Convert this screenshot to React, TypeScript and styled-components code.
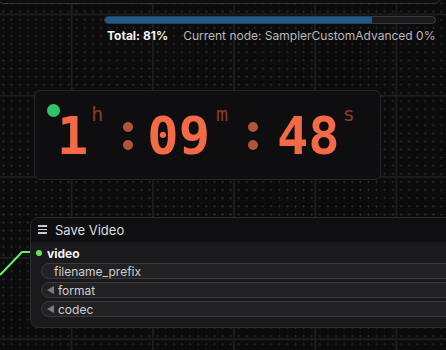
import React from 'react'
import styled, { createGlobalStyle } from 'styled-components'

const GlobalStyle = createGlobalStyle`
	html, body {
		margin: 0;
		padding: 0;
		background: #0b0b0c;
		overflow: hidden;
	}
`

const Canvas = styled.div`
	position: relative;
	width: 446px;
	height: 350px;
	overflow: hidden;
	font-family: Inter, 'Liberation Sans', sans-serif;
	background-color: #0b0b0c;
	background-image:
		linear-gradient(to right, #1d1d1f 2px, transparent 2px),
		linear-gradient(to bottom, #1d1d1f 2px, transparent 2px),
		radial-gradient(circle, #262628 0.9px, transparent 1.1px);
	background-size: 81.2px 81.2px, 81.2px 81.2px, 8.12px 8.12px;
	background-position: -10.5px 0, 0 13.5px, -0.5px -0.5px;
`

const TopPanel = styled.div`
	position: absolute;
	left: -4px;
	top: -12px;
	width: 444px;
	height: 14px;
	border: 1px solid #38383a;
	border-radius: 0 0 8px 8px;
	background: #0e0e0f;
`

const Progress = styled.div`
	position: absolute;
	left: 104px;
	top: 16px;
	width: 332px;
	display: flex;
	flex-direction: column;
	gap: 5px;
`

const Track = styled.div`
	height: 6px;
	border: 1px solid #3a3a3c;
	border-radius: 4px;
	background: #1b1b1d;
	overflow: hidden;
`

const Fill = styled.div`
	height: 100%;
	background: #1b5b8e;
`

const ProgressText = styled.div`
	display: flex;
	gap: 15px;
	padding-left: 3px;
	font-size: 12px;
	line-height: 14px;
	white-space: nowrap;
`

const Total = styled.span`
	color: #f2f2f2;
	font-weight: 700;
`

const NodeInfo = styled.span`
	color: #b9b9bb;
`

const Timer = styled.div`
	position: absolute;
	left: 34px;
	top: 90px;
	width: 345px;
	height: 88px;
	background: #0e0e10;
	border: 1px solid #262628;
	border-radius: 6px;
`

const StatusDot = styled.span`
	position: absolute;
	left: 12px;
	top: 13px;
	width: 13px;
	height: 13px;
	border-radius: 50%;
	background: #2fc56b;
`

const Digits = styled.div`
	display: flex;
	align-items: flex-start;
	padding: 19px 0 0 22px;
	font-family: 'DejaVu Sans Mono', 'Liberation Mono', monospace;
`

const Number = styled.span`
	font-size: 52px;
	font-weight: 700;
	line-height: 52px;
	color: #f46a45;
`

const Unit = styled.span<{ $gap: number }>`
	margin: -6px 0 0 ${p => p.$gap}px;
	font-size: 20px;
	line-height: 20px;
	color: #8a3a2a;
`

const Colon = styled.span<{ $before: number; $after: number }>`
	display: flex;
	flex-direction: column;
	gap: 8px;
	margin: 12px ${p => p.$after}px 0 ${p => p.$before}px;
	&::before,
	&::after {
		content: '';
		width: 10px;
		height: 10px;
		border-radius: 50%;
		background: #b5523a;
	}
`

const Link = styled.svg`
	position: absolute;
	left: 0;
	top: 240px;
`

const Node = styled.div`
	position: absolute;
	left: 30px;
	top: 217px;
	width: 440px;
	height: 109px;
	border: 1px solid #2b2b2d;
	border-radius: 8px;
	background: #1a1a1c;
	overflow: hidden;
`

const Header = styled.div`
	display: flex;
	align-items: center;
	gap: 8px;
	height: 24px;
	padding-left: 7px;
	background: #0f0f11;
	color: #dcdcdc;
	font-size: 13px;
	line-height: 16px;
	padding-bottom: 1px;
	box-sizing: border-box;
`

const Burger = styled.span`
	display: flex;
	flex-direction: column;
	gap: 2.2px;
	width: 9px;
	&::before,
	&::after,
	& > i {
		content: '';
		display: block;
		height: 1.3px;
		background: #c8c8c8;
	}
`

const Body = styled.div`
	display: flex;
	flex-direction: column;
	padding: 4px 0 0 10px;
`

const Output = styled.div`
	display: flex;
	align-items: center;
	gap: 5px;
	height: 14px;
	margin-left: -5px;
	color: #f4f4f4;
	font-size: 12px;
	font-weight: 700;
	&::before {
		content: '';
		width: 6px;
		height: 6px;
		border-radius: 50%;
		background: #5ee85a;
	}
`

const Widget = styled.div<{ $combo?: boolean }>`
	display: flex;
	align-items: center;
	gap: 4px;
	height: 14px;
	margin-top: 3px;
	padding-left: ${p => (p.$combo ? 5 : 12)}px;
	border: 1px solid #3a3a3c;
	border-radius: 9px;
	background: #222224;
	color: #cfcfd1;
	font-size: 12px;
`

const Arrow = styled.span`
	width: 0;
	height: 0;
	border-top: 4.5px solid transparent;
	border-bottom: 4.5px solid transparent;
	border-right: 7px solid #7c7c7e;
`

export default function App() {
	return (
		<Canvas>
			<GlobalStyle />
			<TopPanel />
			<Progress>
				<Track>
					<Fill style={{ width: '81%' }} />
				</Track>
				<ProgressText>
					<Total>Total: 81%</Total>
					<NodeInfo>Current node: SamplerCustomAdvanced 0%</NodeInfo>
				</ProgressText>
			</Progress>

			<Timer>
				<StatusDot />
				<Digits>
					<Number>1</Number>
					<Unit $gap={3}>h</Unit>
					<Colon $before={20} $after={14} />
					<Number>09</Number>
					<Unit $gap={6}>m</Unit>
					<Colon $before={20} $after={19} />
					<Number>48</Number>
					<Unit $gap={3}>s</Unit>
				</Digits>
			</Timer>

			<Link width="34" height="40" viewBox="0 0 34 40">
				<polyline points="0,35 22,12 31,12" fill="none" stroke="#66ee66" strokeWidth="2" />
			</Link>

			<Node>
				<Header>
					<Burger>
						<i />
					</Burger>
					Save Video
				</Header>
				<Body>
					<Output>video</Output>
					<Widget>filename_prefix</Widget>
					<Widget $combo>
						<Arrow />
						format
					</Widget>
					<Widget $combo>
						<Arrow />
						codec
					</Widget>
				</Body>
			</Node>
		</Canvas>
	)
}
